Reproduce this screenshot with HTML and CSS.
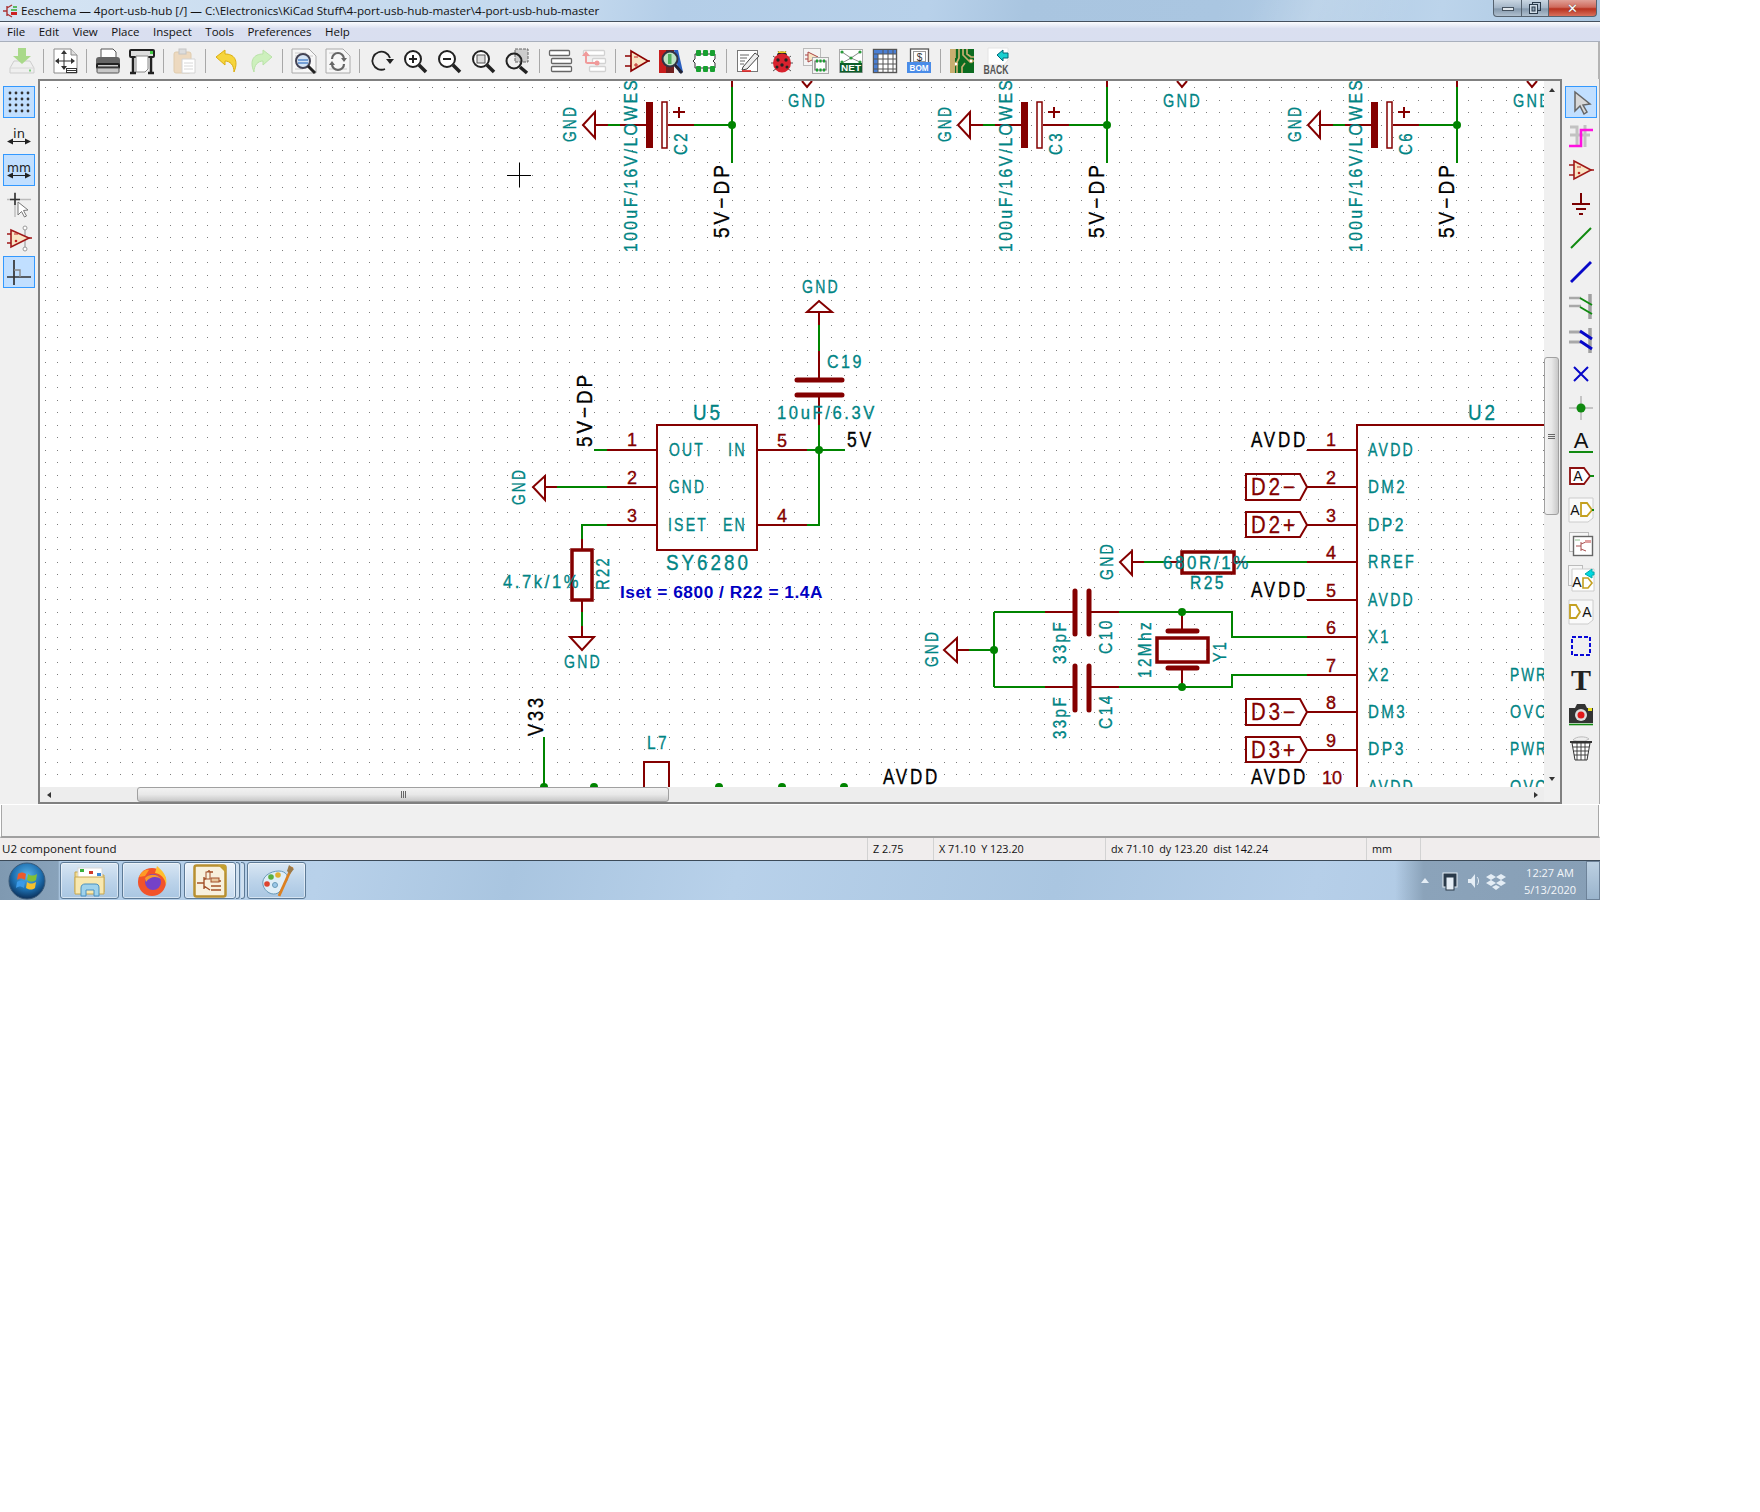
FILE: index.html
```html
<!DOCTYPE html>
<html lang="en">
<head>
<meta charset="utf-8">
<title>Eeschema</title>
<link rel="stylesheet" href="styles.css">
</head>
<body>
<div class="window">
  <header class="titlebar">
    <svg class="appicon" viewBox="0 0 16 16" width="16" height="16"><path d="M1 8H5M5 3V13M5 5L10 2M5 11L10 14" fill="none" stroke="#a33" stroke-width="1.4"/><path d="M9 7H15M11 4H15" stroke="#3a3" stroke-width="1.6"/><rect x="9" y="9" width="6" height="3" fill="#c22"/></svg>
    <span class="titletext">Eeschema — 4port-usb-hub [/] — C:\Electronics\KiCad Stuff\4-port-usb-hub-master\4-port-usb-hub-master</span>
    <div class="winbtns">
      <span class="wb wb-min"><i></i></span>
      <span class="wb wb-max"><svg viewBox="0 0 12 12" width="12" height="12"><rect x="3.5" y="0.5" width="8" height="8" fill="none" stroke="#2a3a4a"/><rect x="0.5" y="2.5" width="8" height="9" fill="#cfdbe6" stroke="#2a3a4a"/><rect x="3" y="5" width="3" height="4" fill="#8fa3b5" stroke="#2a3a4a"/></svg></span>
      <span class="wb wb-close">✕</span>
    </div>
  </header>

  <nav class="menubar">
    <span>File</span><span>Edit</span><span>View</span><span>Place</span><span>Inspect</span><span>Tools</span><span>Preferences</span><span>Help</span>
  </nav>

  <div class="toolbar">
    <span class="tb"><svg class="ic" viewBox="0 0 26 26"><path d="M5 13H21L25 20V25H1V20Z" fill="#efefef" stroke="#cdcdcd"/><path d="M1 20H25" stroke="#d8d8d8"/><rect x="20" y="21.5" width="2" height="2" fill="#7fd07f"/><path d="M9 0H17V8H22L13 16L4 8H9Z" fill="#a9d98a"/></svg></span>
    <i class="sep"></i>
    <span class="tb"><svg class="ic" viewBox="0 0 26 26"><path d="M2 1H19L25 7V25H2Z" fill="#fff" stroke="#8a8a8a"/><path d="M19 1V7H25" fill="#ddd" stroke="#8a8a8a"/><path d="M12 4V21M4 13H22" stroke="#333" stroke-width="1"/><path d="M12 2l-3 4h6zM12 22l-3-4h6zM3 13l4-3v6zM23 13l-4-3v6z" fill="#333"/><rect x="14.500" y="20.500" width="10" height="4" fill="#fff" stroke="#333"/><path d="M15 22.500H24" stroke="#333"/></svg></span>
    <i class="sep"></i>
    <span class="tb"><svg class="ic" viewBox="0 0 26 26"><path d="M6 1H18L21 4V11H6Z" fill="#fff" stroke="#555"/><rect x="1" y="9" width="24" height="12" rx="3" fill="#666"/><rect x="1" y="15" width="24" height="6" rx="2" fill="#222"/><rect x="3" y="17" width="20" height="1.500" fill="#ccc"/><path d="M2 20H24V24C24 25 23 25 22 25H4C3 25 2 25 2 24Z" fill="#c8c8c8" stroke="#555"/></svg></span>
    <span class="tb"><svg class="ic" viewBox="0 0 26 26"><rect x="1" y="2" width="24" height="7" rx="1" fill="#ddd" stroke="#222" stroke-width="2"/><rect x="21" y="3" width="3" height="3" fill="#4c4"/><path d="M7 8H19V21L16 24H7Z" fill="#fff" stroke="#888"/><path d="M4 9V24M22 9V24M1 25H7M19 25H25" stroke="#222" stroke-width="2.500"/></svg></span>
    <i class="sep"></i>
    <span class="tb"><svg class="ic" viewBox="0 0 26 26"><rect x="3" y="4" width="17" height="21" rx="2" fill="#edd9bf" stroke="#e0ccae"/><rect x="8" y="1" width="7" height="5" fill="#ddd" stroke="#c4c4c4"/><path d="M11 11H24V25H11Z" fill="#fff" stroke="#d4d4d4"/><path d="M13 15H22M13 18H22M13 21H22" stroke="#d8d8d8"/></svg></span>
    <i class="sep"></i>
    <span class="tb"><svg class="ic" viewBox="0 0 26 26"><path d="M2 9L11 2V6C20 6 25 12 20 24C20 17 16 13 11 13V17Z" fill="#f6d53c" stroke="#dcae10"/></svg></span>
    <span class="tb"><svg class="ic" viewBox="0 0 26 26"><path d="M24 9L15 2V6C6 6 1 12 6 24C6 17 10 13 15 13V17Z" fill="#cdf0bd" stroke="#b9e2a8"/></svg></span>
    <i class="sep"></i>
    <span class="tb"><svg class="ic" viewBox="0 0 26 26"><path d="M1 1H18L25 8V25H1Z" fill="#f7f7f7" stroke="#aaa"/><path d="M4 5H15M4 8H22M4 21H12" stroke="#ccc"/><circle cx="12" cy="13" r="7" fill="#d5e4f5" stroke="#445" stroke-width="2"/><path d="M7 12H17M7 15H17" stroke="#5588cc" stroke-width="1.500"/><path d="M17 18L24 25" stroke="#222" stroke-width="3"/></svg></span>
    <span class="tb"><svg class="ic" viewBox="0 0 26 26"><path d="M1 1H18L25 8V25H1Z" fill="#f7f7f7" stroke="#aaa"/><path d="M4 5H15M4 21H22" stroke="#ccc"/><path d="M7 11A6 6 0 0 1 19 11M19 16A6 6 0 0 1 7 16" fill="none" stroke="#666" stroke-width="2.200"/><path d="M16 10H22L19 14ZM4 17H10L7 13Z" fill="#666"/></svg></span>
    <i class="sep"></i>
    <span class="tb"><svg class="ic" viewBox="0 0 26 26"><path d="M17 21A9 9 0 1 1 22 10" fill="none" stroke="#222" stroke-width="1.800"/><path d="M18 11H26L22 16Z" fill="#222"/></svg></span>
    <span class="tb"><svg class="ic" viewBox="0 0 26 26"><circle cx="11" cy="11" r="8" fill="#fff" stroke="#222" stroke-width="2"/><path d="M7 11H15M11 7V15" stroke="#222" stroke-width="2"/><path d="M17 17L24 24" stroke="#222" stroke-width="3.500"/></svg></span>
    <span class="tb"><svg class="ic" viewBox="0 0 26 26"><circle cx="11" cy="11" r="8" fill="#fff" stroke="#222" stroke-width="2"/><path d="M7 11H15" stroke="#222" stroke-width="2"/><path d="M17 17L24 24" stroke="#222" stroke-width="3.500"/></svg></span>
    <span class="tb"><svg class="ic" viewBox="0 0 26 26"><circle cx="11" cy="11" r="8" fill="#fff" stroke="#222" stroke-width="2"/><rect x="7" y="7" width="8" height="8" fill="#ddd" stroke="#555"/><path d="M17 17L24 24" stroke="#222" stroke-width="3.500"/></svg></span>
    <span class="tb"><svg class="ic" viewBox="0 0 26 26"><rect x="11" y="1" width="13" height="13" fill="#ccc" stroke="#666" stroke-dasharray="3 1"/><circle cx="10" cy="13" r="7.500" fill="none" stroke="#222" stroke-width="2"/><path d="M16 19L23 25" stroke="#222" stroke-width="3.500"/></svg></span>
    <i class="sep"></i>
    <span class="tb"><svg class="ic" viewBox="0 0 26 26"><g fill="#fff" stroke="#666" stroke-width="1.300"><rect x="2.500" y="2.500" width="20" height="5" rx="1"/><rect x="4.500" y="10.500" width="20" height="5" rx="1"/><rect x="4.500" y="18.500" width="20" height="5" rx="1"/></g></svg></span>
    <span class="tb"><svg class="ic" viewBox="0 0 26 26"><g fill="#fff" stroke="#d2d2d2" stroke-width="1.300"><rect x="2.500" y="2.500" width="21" height="5" rx="1"/><rect x="11.500" y="10.500" width="13" height="5" rx="1"/><rect x="8.500" y="18.500" width="16" height="5" rx="1"/></g><path d="M5 8V14C5 15 6 15 8 15H15" fill="none" stroke="#f09a9a" stroke-width="2"/><path d="M5 3L1 8H9Z" fill="#f09a9a"/><circle cx="16" cy="15" r="2.500" fill="#f09a9a"/></svg></span>
    <i class="sep"></i>
    <span class="tb"><svg class="ic" viewBox="0 0 26 26"><path d="M7 3L24 13L7 23Z" fill="#f8e4c4" stroke="#8c0000" stroke-width="1.600"/><path d="M1 8H7M1 18H7M24 13H26" stroke="#8c0000" stroke-width="1.600"/><path d="M10 9H14M10 17H14M12 15V19" stroke="#c02020"/></svg></span>
    <span class="tb"><svg class="ic" viewBox="0 0 26 26"><rect x="1" y="2" width="7" height="23" fill="#c81e1e"/><rect x="8" y="2" width="8" height="23" fill="#702020"/><path d="M16 2H20L25 24L21 25Z" fill="#2a5fc0"/><circle cx="12" cy="11" r="7.500" fill="#bfe3c4" stroke="#334" stroke-width="2"/><rect x="10" y="6" width="3.500" height="10" fill="#50b060"/><path d="M17 17L24 25" stroke="#223" stroke-width="3"/></svg></span>
    <span class="tb"><svg class="ic" viewBox="0 0 26 26"><path d="M3 6H23V11L21 13L23 15V20H3V15L1 13L3 11Z" fill="#fff" stroke="#333" stroke-width="1"/><g fill="#18a030"><rect x="4" y="2" width="5" height="6" rx="1"/><rect x="11" y="2" width="5" height="6" rx="1"/><rect x="18" y="2" width="5" height="6" rx="1"/><rect x="4" y="18" width="5" height="6" rx="1"/><rect x="11" y="18" width="5" height="6" rx="1"/><rect x="18" y="18" width="5" height="6" rx="1"/></g></svg></span>
    <i class="sep"></i>
    <span class="tb"><svg class="ic" viewBox="0 0 26 26"><rect x="2.500" y="2.500" width="20" height="21" fill="#fff" stroke="#777"/><path d="M5 7H14M5 10H12M5 13H10M5 16H9" stroke="#666"/><path d="M8 19L20 5L24 8L12 21L7 22Z" fill="#eee" stroke="#444"/><path d="M7 23H16" stroke="#e02020" stroke-width="1.600"/></svg></span>
    <span class="tb"><svg class="ic" viewBox="0 0 26 26"><path d="M4 8L8 11M22 8L18 11M2 15H6M24 15H20M4 23L8 20M22 23L18 20M9 3L11 6M17 3L15 6" stroke="#555"/><ellipse cx="13" cy="7" rx="5" ry="3.500" fill="#222"/><rect x="9" y="3.500" width="8" height="1.500" fill="#e8c820"/><ellipse cx="13" cy="15" rx="9" ry="9.500" fill="#d8222e"/><g fill="#222"><circle cx="9" cy="12" r="1.700"/><circle cx="17" cy="12" r="1.700"/><circle cx="13" cy="17" r="1.700"/><circle cx="8" cy="19" r="1.500"/><circle cx="18" cy="19" r="1.500"/></g></svg></span>
    <span class="tb"><svg class="ic" viewBox="0 0 26 26"><rect x="0.500" y="0.500" width="17" height="17" fill="#f4f4f4" stroke="#bbb"/><path d="M5 4L15 9L5 14Z" fill="#f8e4c4" stroke="#a44"/><path d="M2 7H5M2 11H5" stroke="#a44"/><rect x="9.500" y="9.500" width="16" height="16" fill="#f4f4f4" stroke="#aaa"/><rect x="12" y="13" width="11" height="9" fill="#fff" stroke="#555"/><g fill="#18a030"><rect x="13" y="11.500" width="2" height="3"/><rect x="16.500" y="11.500" width="2" height="3"/><rect x="20" y="11.500" width="2" height="3"/><rect x="13" y="20.500" width="2" height="3"/><rect x="16.500" y="20.500" width="2" height="3"/><rect x="20" y="20.500" width="2" height="3"/></g></svg></span>
    <span class="tb"><svg class="ic" viewBox="0 0 26 26"><rect x="1.500" y="1.500" width="23" height="23" fill="#fff" stroke="#aaa"/><path d="M4 4L13 10L22 4M4 15L13 10L22 14" fill="none" stroke="#8a8a8a"/><g fill="#2a9a3a"><circle cx="4" cy="4" r="1.600"/><circle cx="13" cy="10" r="1.600"/><circle cx="22" cy="4" r="1.600"/><circle cx="4" cy="14" r="1.600"/><circle cx="22" cy="14" r="1.600"/></g><rect x="2" y="15" width="22" height="9.500" fill="#0e5c2a"/><text class="i-net" x="13" y="23.300" textLength="20" lengthAdjust="spacingAndGlyphs">NET</text></svg></span>
    <span class="tb"><svg class="ic" viewBox="0 0 26 26"><rect x="1.500" y="1.500" width="23" height="23" fill="#fff" stroke="#555" stroke-width="1.400"/><rect x="2" y="2" width="22" height="4" fill="#4a7fd4"/><rect x="2" y="2" width="4" height="22" fill="#4a7fd4"/><path d="M6 6V24M11 2V24M16 2V24M21 2V24M2 6H24M2 11H24M2 16H24M2 21H24" stroke="#555" stroke-width="1"/></svg></span>
    <span class="tb"><svg class="ic" viewBox="0 0 26 26"><rect x="4.500" y="1" width="18" height="17" fill="#fff" stroke="#555" stroke-width="1.300"/><rect x="7.500" y="3.500" width="12" height="10" fill="none" stroke="#999"/><text class="i-dollar" x="13.500" y="12.500">$</text><rect x="1" y="14" width="24" height="11" fill="#4a8ce8"/><text class="i-bom" x="13" y="23" textLength="19" lengthAdjust="spacingAndGlyphs">BOM</text></svg></span>
    <i class="sep"></i>
    <span class="tb"><svg class="ic" viewBox="0 0 26 26"><rect x="1" y="1" width="24" height="24" fill="#0c6b20"/><rect x="1" y="1" width="5" height="24" fill="#c8ae70"/><path d="M6 1V10M10 1V10L8 14V25M14 1V7L20 13H25M18 1V6L22 9H25M13 25V19L16 15" fill="none" stroke="#c8ae70" stroke-width="1.700"/><circle cx="22" cy="13" r="1.800" fill="#fff" stroke="#c8ae70"/><circle cx="7" cy="16" r="1.800" fill="#fff" stroke="#c8ae70"/></svg></span>
    <span class="tb"><svg class="ic" viewBox="0 0 26 26"><path d="M5 0H25V12L21 17H5Z" fill="#fff" stroke="#e4e4e4"/><path d="M14 7L20 2V5H25V10H20V13Z" fill="#18d0d0" stroke="#067"/><text class="i-back" x="13" y="25.500" textLength="25" lengthAdjust="spacingAndGlyphs">BACK</text></svg></span>
  </div>

  <div class="main">
    <aside class="sidetools">
      <span class="st on"><svg class="ic2" viewBox="0 0 26 26"><g fill="#333"><circle cx="4" cy="4" r="1.400"/><circle cx="10" cy="4" r="1.400"/><circle cx="16" cy="4" r="1.400"/><circle cx="22" cy="4" r="1.400"/><circle cx="4" cy="10" r="1.400"/><circle cx="10" cy="10" r="1.400"/><circle cx="16" cy="10" r="1.400"/><circle cx="22" cy="10" r="1.400"/><circle cx="4" cy="16" r="1.400"/><circle cx="10" cy="16" r="1.400"/><circle cx="16" cy="16" r="1.400"/><circle cx="22" cy="16" r="1.400"/><circle cx="4" cy="22" r="1.400"/><circle cx="10" cy="22" r="1.400"/><circle cx="16" cy="22" r="1.400"/><circle cx="22" cy="22" r="1.400"/></g></svg></span>
      <span class="st"><svg class="ic2" viewBox="0 0 26 26"><text class="i-unit" x="13" y="14.500">in</text><path d="M4 18.500H22" stroke="#222"/><path d="M1 18.500l6-3v6zM25 18.500l-6-3v6z" fill="#222"/></svg></span>
      <span class="st on"><svg class="ic2" viewBox="0 0 26 26"><text class="i-unit" x="13" y="15" textLength="24" lengthAdjust="spacingAndGlyphs">mm</text><path d="M4 18.500H22" stroke="#222"/><path d="M1 18.500l6-3v6zM25 18.500l-6-3v6z" fill="#222"/></svg></span>
      <span class="st"><svg class="ic2" viewBox="0 0 26 26"><path d="M1 8.500H25M9 1V26" stroke="#bbb" stroke-width="1.400"/><path d="M4 8.500H14M9 2V14" stroke="#333" stroke-width="1.600"/><path d="M12 11V24L15.500 20.500L18.500 26L20.500 25L17.500 19.500L22 19Z" fill="#fff" stroke="#777"/></svg></span>
      <span class="st"><svg class="ic2" viewBox="0 0 26 26"><path d="M19 2V24" stroke="#aaa" stroke-width="1.400"/><circle cx="19" cy="3" r="2" fill="#fff" stroke="#999"/><circle cx="19" cy="24" r="2" fill="#fff" stroke="#999"/><path d="M5 5L23 13L5 22Z" fill="#f8e4c4" stroke="#a01818" stroke-width="1.600"/><path d="M1 9H5M1 18H5M23 13H26" stroke="#a01818" stroke-width="1.600"/><path d="M8 9H12" stroke="#c02020"/><circle cx="10" cy="16" r="1.300" fill="#c02020"/></svg></span>
      <span class="st on"><svg class="ic2" viewBox="0 0 26 26"><path d="M1 18H25M8 1V26" stroke="#333" stroke-width="1.700"/><path d="M8 11H14V18" fill="none" stroke="#888" stroke-width="1.400"/></svg></span>
    </aside>

    <div class="frame">
      <svg class="sheet" viewBox="40 81 1504 706">
        <path class="griddots" d="M44.800 87.900H1544M44.800 100.400H1544M44.800 112.900H1544M44.800 125.300H1544M44.800 137.800H1544M44.800 150.300H1544M44.800 162.800H1544M44.800 175.300H1544M44.800 187.800H1544M44.800 200.300H1544M44.800 212.700H1544M44.800 225.200H1544M44.800 237.700H1544M44.800 250.200H1544M44.800 262.700H1544M44.800 275.200H1544M44.800 287.700H1544M44.800 300.200H1544M44.800 312.600H1544M44.800 325.100H1544M44.800 337.600H1544M44.800 350.100H1544M44.800 362.600H1544M44.800 375.100H1544M44.800 387.600H1544M44.800 400.100H1544M44.800 412.500H1544M44.800 425H1544M44.800 437.500H1544M44.800 450H1544M44.800 462.500H1544M44.800 475H1544M44.800 487.500H1544M44.800 499.900H1544M44.800 512.400H1544M44.800 524.900H1544M44.800 537.400H1544M44.800 549.900H1544M44.800 562.400H1544M44.800 574.900H1544M44.800 587.400H1544M44.800 599.800H1544M44.800 612.300H1544M44.800 624.800H1544M44.800 637.300H1544M44.800 649.800H1544M44.800 662.300H1544M44.800 674.800H1544M44.800 687.300H1544M44.800 699.700H1544M44.800 712.200H1544M44.800 724.700H1544M44.800 737.200H1544M44.800 749.700H1544M44.800 762.200H1544M44.800 774.700H1544"/>

        <!-- top capacitor groups -->
        <g>
          <path class="pin" d="M595 125H608M620 125H646M668 125H694M732 81V87M679 107V118M673 112H685M595 112V138L583 125Z"/>
          <rect class="plate-fill" x="646" y="102" width="7" height="46"/><rect class="plate-open" x="662" y="102" width="5" height="46"/>
          <path class="wire" d="M608 125H620M694 125H732M732 87V163"/><circle class="junc" cx="732" cy="125" r="4"/>
          <path class="pin" d="M802 81L807 87L812 81"/>
          <text class="t t-teal" x="576" y="142" transform="rotate(-90 576 142)" textLength="37" lengthAdjust="spacingAndGlyphs">GND</text>
          <text class="t t-teal" x="637" y="252" transform="rotate(-90 637 252)" textLength="188" lengthAdjust="spacingAndGlyphs">100uF/16V/LOWESR</text>
          <text class="t t-teal" x="687" y="155" transform="rotate(-90 687 155)" textLength="24" lengthAdjust="spacingAndGlyphs">C2</text>
          <text class="t t-black" x="729" y="238" transform="rotate(-90 729 238)" textLength="76" lengthAdjust="spacingAndGlyphs">5V−DP</text>
          <text class="t t-teal" x="788" y="107" textLength="39" lengthAdjust="spacingAndGlyphs">GND</text>
        </g>
        <g>
          <path class="pin" d="M970 125H983M995 125H1021M1043 125H1069M1107 81V87M1054 107V118M1048 112H1060M970 112V138L958 125Z"/>
          <rect class="plate-fill" x="1021" y="102" width="7" height="46"/><rect class="plate-open" x="1037" y="102" width="5" height="46"/>
          <path class="wire" d="M983 125H995M1069 125H1107M1107 87V163"/><circle class="junc" cx="1107" cy="125" r="4"/>
          <path class="pin" d="M1177 81L1182 87L1187 81"/>
          <text class="t t-teal" x="951" y="142" transform="rotate(-90 951 142)" textLength="37" lengthAdjust="spacingAndGlyphs">GND</text>
          <text class="t t-teal" x="1012" y="252" transform="rotate(-90 1012 252)" textLength="188" lengthAdjust="spacingAndGlyphs">100uF/16V/LOWESR</text>
          <text class="t t-teal" x="1062" y="155" transform="rotate(-90 1062 155)" textLength="24" lengthAdjust="spacingAndGlyphs">C3</text>
          <text class="t t-black" x="1104" y="238" transform="rotate(-90 1104 238)" textLength="76" lengthAdjust="spacingAndGlyphs">5V−DP</text>
          <text class="t t-teal" x="1163" y="107" textLength="39" lengthAdjust="spacingAndGlyphs">GND</text>
        </g>
        <g>
          <path class="pin" d="M1320 125H1333M1345 125H1371M1393 125H1419M1457 81V87M1404 107V118M1398 112H1410M1320 112V138L1308 125Z"/>
          <rect class="plate-fill" x="1371" y="102" width="7" height="46"/><rect class="plate-open" x="1387" y="102" width="5" height="46"/>
          <path class="wire" d="M1333 125H1345M1419 125H1457M1457 87V163"/><circle class="junc" cx="1457" cy="125" r="4"/>
          <path class="pin" d="M1527 81L1532 87L1537 81"/>
          <text class="t t-teal" x="1301" y="142" transform="rotate(-90 1301 142)" textLength="37" lengthAdjust="spacingAndGlyphs">GND</text>
          <text class="t t-teal" x="1362" y="252" transform="rotate(-90 1362 252)" textLength="188" lengthAdjust="spacingAndGlyphs">100uF/16V/LOWESR</text>
          <text class="t t-teal" x="1412" y="155" transform="rotate(-90 1412 155)" textLength="24" lengthAdjust="spacingAndGlyphs">C6</text>
          <text class="t t-black" x="1454" y="238" transform="rotate(-90 1454 238)" textLength="76" lengthAdjust="spacingAndGlyphs">5V−DP</text>
          <text class="t t-teal" x="1513" y="107" textLength="39" lengthAdjust="spacingAndGlyphs">GND</text>
        </g>

        <!-- cursor -->
        <path class="cursor" d="M507 175.500H531M519.500 163V187"/>

        <!-- U5 regulator -->
        <rect class="body" x="657" y="425" width="100" height="125"/>
        <path class="pin" d="M819 312V325M819 351V380M819 395V425M807 312H832L819 301ZM657 450H607M757 450H807M657 487H607M557 487H545M545 476V500L533 487ZM657 525H607M757 525H807M582 539V550M582 600V612M582 626V637M570 637H594L582 650Z"/>
        <path class="plate" d="M797 380H842M797 395H842"/>
        <path class="wire" d="M819 325V351M819 425V525H807M807 450H845M607 450H594M607 487H557M607 525H582V539M582 612V626"/>
        <circle class="junc" cx="819" cy="450" r="4"/>
        <rect class="body-thick" x="572" y="550" width="20" height="50"/>
        <text class="t t-teal" x="802" y="293" textLength="38" lengthAdjust="spacingAndGlyphs">GND</text>
        <text class="t t-teal" x="827" y="368" textLength="37" lengthAdjust="spacingAndGlyphs">C19</text>
        <text class="t t-teal" x="777" y="419" textLength="100" lengthAdjust="spacingAndGlyphs">10uF/6.3V</text>
        <text class="t t-black" x="847" y="447" textLength="27" lengthAdjust="spacingAndGlyphs">5V</text>
        <text class="t t-black" x="592" y="447" transform="rotate(-90 592 447)" textLength="75" lengthAdjust="spacingAndGlyphs">5V−DP</text>
        <text class="t t-big" x="693" y="420" textLength="30" lengthAdjust="spacingAndGlyphs">U5</text>
        <text class="t t-num t-mid" x="632" y="446">1</text>
        <text class="t t-num t-mid" x="632" y="484">2</text>
        <text class="t t-num t-mid" x="632" y="522">3</text>
        <text class="t t-num t-mid" x="782" y="447">5</text>
        <text class="t t-num t-mid" x="782" y="522">4</text>
        <text class="t t-teal" x="669" y="456" textLength="36" lengthAdjust="spacingAndGlyphs">OUT</text>
        <text class="t t-teal" x="728" y="456" textLength="19" lengthAdjust="spacingAndGlyphs">IN</text>
        <text class="t t-teal" x="669" y="493" textLength="37" lengthAdjust="spacingAndGlyphs">GND</text>
        <text class="t t-teal" x="668" y="531" textLength="40" lengthAdjust="spacingAndGlyphs">ISET</text>
        <text class="t t-teal" x="723" y="531" textLength="24" lengthAdjust="spacingAndGlyphs">EN</text>
        <text class="t t-big" x="666" y="570" textLength="85" lengthAdjust="spacingAndGlyphs">SY6280</text>
        <text class="t t-teal" x="609" y="590" transform="rotate(-90 609 590)" textLength="34" lengthAdjust="spacingAndGlyphs">R22</text>
        <text class="t t-teal" x="503" y="588" textLength="78" lengthAdjust="spacingAndGlyphs">4.7k/1%</text>
        <text class="t t-blue" x="620" y="598" textLength="203" lengthAdjust="spacingAndGlyphs">Iset = 6800 / R22 = 1.4A</text>
        <text class="t t-teal" x="564" y="668" textLength="38" lengthAdjust="spacingAndGlyphs">GND</text>
        <text class="t t-teal" x="525" y="505" transform="rotate(-90 525 505)" textLength="37" lengthAdjust="spacingAndGlyphs">GND</text>

        <!-- V33 / L7 -->
        <path class="wire" d="M544 737V787"/>
        <circle class="junc" cx="544" cy="787" r="4"/><circle class="junc" cx="594" cy="787" r="4"/><circle class="junc" cx="719" cy="787" r="4"/><circle class="junc" cx="782" cy="787" r="4"/><circle class="junc" cx="844" cy="787" r="4"/>
        <path class="pin" d="M644 787V762H669V787"/>
        <text class="t t-black" x="543" y="736" transform="rotate(-90 543 736)" textLength="41" lengthAdjust="spacingAndGlyphs">V33</text>
        <text class="t t-teal" x="647" y="749" textLength="22" lengthAdjust="spacingAndGlyphs">L7</text>
        <text class="t t-black" x="883" y="784" textLength="57" lengthAdjust="spacingAndGlyphs">AVDD</text>

        <!-- U2 hub -->
        <path class="body-open" d="M1544 425H1357V790"/>
        <path class="pin" d="M1357 450H1307M1357 487H1307M1357 525H1307M1357 562H1307M1357 600H1307M1357 637H1307M1357 675H1307M1357 712H1307M1357 750H1307"/>
        <path class="pin" d="M1246 474H1300L1307 487L1300 500H1246ZM1246 512H1300L1307 525L1300 537H1246ZM1246 699H1300L1307 712L1300 725H1246ZM1246 737H1300L1307 750L1300 762H1246Z"/>
        <text class="t t-big" x="1468" y="420" textLength="30" lengthAdjust="spacingAndGlyphs">U2</text>
        <text class="t t-black" x="1251" y="447" textLength="57" lengthAdjust="spacingAndGlyphs">AVDD</text>
        <text class="t t-black" x="1251" y="597" textLength="57" lengthAdjust="spacingAndGlyphs">AVDD</text>
        <text class="t t-black" x="1251" y="784" textLength="57" lengthAdjust="spacingAndGlyphs">AVDD</text>
        <text class="t t-red" x="1251" y="495" textLength="47" lengthAdjust="spacingAndGlyphs">D2−</text>
        <text class="t t-red" x="1251" y="533" textLength="47" lengthAdjust="spacingAndGlyphs">D2+</text>
        <text class="t t-red" x="1251" y="720" textLength="47" lengthAdjust="spacingAndGlyphs">D3−</text>
        <text class="t t-red" x="1251" y="758" textLength="47" lengthAdjust="spacingAndGlyphs">D3+</text>
        <text class="t t-num t-mid" x="1331" y="446">1</text>
        <text class="t t-num t-mid" x="1331" y="484">2</text>
        <text class="t t-num t-mid" x="1331" y="522">3</text>
        <text class="t t-num t-mid" x="1331" y="559">4</text>
        <text class="t t-num t-mid" x="1331" y="597">5</text>
        <text class="t t-num t-mid" x="1331" y="634">6</text>
        <text class="t t-num t-mid" x="1331" y="672">7</text>
        <text class="t t-num t-mid" x="1331" y="709">8</text>
        <text class="t t-num t-mid" x="1331" y="747">9</text>
        <text class="t t-num t-mid" x="1332" y="784">10</text>
        <text class="t t-teal" x="1368" y="456" textLength="47" lengthAdjust="spacingAndGlyphs">AVDD</text>
        <text class="t t-teal" x="1368" y="493" textLength="39" lengthAdjust="spacingAndGlyphs">DM2</text>
        <text class="t t-teal" x="1368" y="531" textLength="38" lengthAdjust="spacingAndGlyphs">DP2</text>
        <text class="t t-teal" x="1368" y="568" textLength="48" lengthAdjust="spacingAndGlyphs">RREF</text>
        <text class="t t-teal" x="1368" y="606" textLength="47" lengthAdjust="spacingAndGlyphs">AVDD</text>
        <text class="t t-teal" x="1368" y="643" textLength="23" lengthAdjust="spacingAndGlyphs">X1</text>
        <text class="t t-teal" x="1368" y="681" textLength="23" lengthAdjust="spacingAndGlyphs">X2</text>
        <text class="t t-teal" x="1368" y="718" textLength="39" lengthAdjust="spacingAndGlyphs">DM3</text>
        <text class="t t-teal" x="1368" y="755" textLength="38" lengthAdjust="spacingAndGlyphs">DP3</text>
        <text class="t t-teal" x="1368" y="793" textLength="47" lengthAdjust="spacingAndGlyphs">AVDD</text>
        <text class="t t-teal" x="1510" y="681" textLength="38" lengthAdjust="spacingAndGlyphs">PWR</text>
        <text class="t t-teal" x="1510" y="718" textLength="38" lengthAdjust="spacingAndGlyphs">OVC</text>
        <text class="t t-teal" x="1510" y="755" textLength="38" lengthAdjust="spacingAndGlyphs">PWR</text>
        <text class="t t-teal" x="1510" y="793" textLength="38" lengthAdjust="spacingAndGlyphs">OVC</text>

        <!-- R25 -->
        <path class="wire" d="M1144 562H1169M1245 562H1307"/>
        <path class="pin" d="M1132 562H1144M1169 562H1182M1234 562H1245M1132 551V575L1120 562Z"/>
        <rect class="body-thick" x="1182" y="552" width="52" height="21"/>
        <text class="t t-teal" x="1113" y="580" transform="rotate(-90 1113 580)" textLength="38" lengthAdjust="spacingAndGlyphs">GND</text>
        <text class="t t-teal" x="1163" y="569" textLength="88" lengthAdjust="spacingAndGlyphs">680R/1%</text>
        <text class="t t-teal" x="1190" y="589" textLength="36" lengthAdjust="spacingAndGlyphs">R25</text>

        <!-- crystal section -->
        <path class="wire" d="M969 650H994M994 612V687M994 612H1045M1119 612H1232V637H1307M994 687H1045M1119 687H1232V675H1307"/>
        <path class="pin" d="M957 650H969M957 638V662L944 650ZM1045 612H1075M1089 612H1119M1045 687H1075M1089 687H1119M1182 612V631M1182 668V687"/>
        <path class="plate" d="M1075 591V634M1089 591V634M1075 666V710M1089 666V710M1168 631H1197M1168 668H1197"/>
        <rect class="body-thick" x="1157" y="638" width="51" height="24"/>
        <circle class="junc" cx="994" cy="650" r="4"/><circle class="junc" cx="1182" cy="612" r="4"/><circle class="junc" cx="1182" cy="687" r="4"/>
        <text class="t t-teal" x="938" y="667" transform="rotate(-90 938 667)" textLength="37" lengthAdjust="spacingAndGlyphs">GND</text>
        <text class="t t-teal" x="1066" y="664" transform="rotate(-90 1066 664)" textLength="44" lengthAdjust="spacingAndGlyphs">33pF</text>
        <text class="t t-teal" x="1066" y="739" transform="rotate(-90 1066 739)" textLength="44" lengthAdjust="spacingAndGlyphs">33pF</text>
        <text class="t t-teal" x="1112" y="654" transform="rotate(-90 1112 654)" textLength="36" lengthAdjust="spacingAndGlyphs">C10</text>
        <text class="t t-teal" x="1112" y="729" transform="rotate(-90 1112 729)" textLength="36" lengthAdjust="spacingAndGlyphs">C14</text>
        <text class="t t-teal" x="1151" y="678" transform="rotate(-90 1151 678)" textLength="58" lengthAdjust="spacingAndGlyphs">12Mhz</text>
        <text class="t t-teal" x="1226" y="662" transform="rotate(-90 1226 662)" textLength="22" lengthAdjust="spacingAndGlyphs">Y1</text>
      </svg>

      <div class="vbar">
        <span class="arr arr-up"></span>
        <span class="vthumb"><i></i><i></i><i></i></span>
        <span class="arr arr-down"></span>
      </div>
      <div class="hbar">
        <span class="arr arr-left"></span>
        <span class="hthumb"><i></i><i></i><i></i></span>
        <span class="arr arr-right"></span>
      </div>
      <div class="corner"></div>
    </div>

    <aside class="sidetools sidetools-right">
      <span class="st on"><svg class="ic2" viewBox="0 0 26 26"><path d="M7 3V22L12 17L16 25L19 23L15 16L22 15Z" fill="#d8d8d8" stroke="#666" stroke-width="1.500"/></svg></span>
      <span class="st"><svg class="ic2" viewBox="0 0 26 26"><path d="M2 4H9V22M2 12H22M17 2V24" fill="none" stroke="#c2c2c2" stroke-width="3"/><path d="M1 23H13V7H25" fill="none" stroke="#ff10e0" stroke-width="2.600"/></svg></span>
      <span class="st"><svg class="ic2" viewBox="0 0 26 26"><path d="M6 4L23 13L6 22Z" fill="#f8e4c4" stroke="#a01818" stroke-width="1.600"/><path d="M1 8H6M1 18H6M23 13H26" stroke="#a01818" stroke-width="1.600"/><path d="M9 10H13" stroke="#c02020"/><circle cx="11" cy="16" r="1.300" fill="#c02020"/></svg></span>
      <span class="st"><svg class="ic2" viewBox="0 0 26 26"><path d="M13 2V13M4 13H22M8 18H18M11 23H15" stroke="#7a0000" stroke-width="2"/></svg></span>
      <span class="st"><svg class="ic2" viewBox="0 0 26 26"><path d="M3 23L23 3" stroke="#108a10" stroke-width="2"/></svg></span>
      <span class="st"><svg class="ic2" viewBox="0 0 26 26"><path d="M3 23L23 3" stroke="#0808c8" stroke-width="2.800"/></svg></span>
      <span class="st"><svg class="ic2" viewBox="0 0 26 26"><path d="M1 5H13M1 13H13" stroke="#a8a8a8" stroke-width="2.500"/><path d="M22 1V26" stroke="#a0a0a0" stroke-width="3.500"/><path d="M12 5L24 12M12 14L24 21" stroke="#108a10" stroke-width="2"/></svg></span>
      <span class="st"><svg class="ic2" viewBox="0 0 26 26"><path d="M1 5H13M1 15H13" stroke="#a8a8a8" stroke-width="3"/><path d="M22 1V26" stroke="#a0a0a0" stroke-width="3.500"/><path d="M12 4L24 12M12 14L24 22" stroke="#0808c8" stroke-width="3"/></svg></span>
      <span class="st"><svg class="ic2" viewBox="0 0 26 26"><path d="M6 6L20 20M20 6L6 20" stroke="#0808c8" stroke-width="2"/></svg></span>
      <span class="st"><svg class="ic2" viewBox="0 0 26 26"><path d="M1 13H25M13 1V25" stroke="#c4c4c4" stroke-width="2"/><circle cx="13" cy="13" r="4.500" fill="#108a10"/></svg></span>
      <span class="st"><svg class="ic2" viewBox="0 0 26 26"><text class="i-a" x="13" y="19">A</text><path d="M1 23H25" stroke="#108a10" stroke-width="2"/></svg></span>
      <span class="st"><svg class="ic2" viewBox="0 0 26 26"><path d="M2 5H16L22 13L16 21H2Z" fill="#fff" stroke="#8c1010" stroke-width="1.800"/><path d="M22 13H26" stroke="#108a10" stroke-width="2"/><text class="i-a2" x="10" y="18">A</text></svg></span>
      <span class="st"><svg class="ic2" viewBox="0 0 26 26"><path d="M1 1H25V21L20 25H1Z" fill="#fafafa" stroke="#ccc"/><text class="i-a2" x="7" y="18">A</text><path d="M13 6H19L24 13L19 19H13Z" fill="#fff" stroke="#c4a020" stroke-width="1.800"/><path d="M24 13H26" stroke="#108a10" stroke-width="2"/></svg></span>
      <span class="st"><svg class="ic2" viewBox="0 0 26 26"><rect x="1.500" y="1.500" width="19" height="19" fill="#f6f6f6" stroke="#bbb"/><rect x="5.500" y="5.500" width="19" height="19" fill="#fff" stroke="#666" stroke-width="1.400"/><path d="M8 15H13M13 11V20M13 13L18 11M13 18L18 20" stroke="#a85050" fill="none"/><rect x="17" y="9" width="6" height="3" fill="#e0a0a0"/><path d="M7 9H12" stroke="#90c090"/></svg></span>
      <span class="st"><svg class="ic2" viewBox="0 0 26 26"><rect x="0.500" y="0.500" width="14" height="20" fill="#f6f6f6" stroke="#bbb"/><path d="M4 4H26V26H4Z" fill="#fff" stroke="#ccc"/><text class="i-a2" x="9" y="22">A</text><path d="M15 13H20L24 18L20 23H15Z" fill="#fff" stroke="#c4a020" stroke-width="1.600"/><path d="M24 4L17 9L24 13V10H26V7H24Z" fill="#00d8e0" stroke="#0aa"/></svg></span>
      <span class="st"><svg class="ic2" viewBox="0 0 26 26"><path d="M1 1H25V21L20 25H1Z" fill="#fafafa" stroke="#ccc"/><path d="M2 6H8L12 13L8 19H2Z" fill="#fff" stroke="#c4a020" stroke-width="1.800"/><text class="i-a2" x="19" y="18">A</text></svg></span>
      <span class="st"><svg class="ic2" viewBox="0 0 26 26"><rect x="4" y="4" width="18" height="18" fill="none" stroke="#0808d8" stroke-width="2" stroke-dasharray="4 2"/></svg></span>
      <span class="st"><svg class="ic2" viewBox="0 0 26 26"><text class="i-t" x="13" y="23">T</text></svg></span>
      <span class="st"><svg class="ic2" viewBox="0 0 26 26"><path d="M1 7H7L9 3H17L19 7H25V22H1Z" fill="#333"/><rect x="20" y="7" width="4" height="3" fill="#e8e020"/><circle cx="13" cy="14" r="6" fill="#ddd"/><circle cx="13" cy="14" r="3.500" fill="#e01818"/><path d="M1 23.500H25" stroke="#108a10" stroke-width="1.600"/></svg></span>
      <span class="st"><svg class="ic2" viewBox="0 0 26 26"><path d="M5 5C8 1 18 1 21 4L17 6H9Z" fill="#eee" stroke="#bbb"/><path d="M2 7H24" stroke="#333" stroke-width="2"/><path d="M4 8L7 25H19L22 8Z" fill="#fff" stroke="#333"/><path d="M5 12H21M6 16H20M6 20H20M9 8V25M13 8V25M17 8V25" stroke="#333" stroke-width="0.900"/></svg></span>
    </aside>
  </div>

  <div class="msgpanel"></div>

  <footer class="statusbar">
    <span class="sc sc-1">U2 component found</span>
    <span class="sc sc-2">Z 2.75</span>
    <span class="sc sc-3">X 71.10&nbsp; Y 123.20</span>
    <span class="sc sc-4">dx 71.10&nbsp; dy 123.20&nbsp; dist 142.24</span>
    <span class="sc sc-5">mm</span>
    <span class="sc sc-6"></span>
  </footer>

  <div class="taskbar">
    <span class="start"><svg viewBox="0 0 38 38" width="38" height="38"><defs><radialGradient id="orb" cx="50%" cy="35%" r="65%"><stop offset="0" stop-color="#5ab4e8"/><stop offset="0.6" stop-color="#1d6fb0"/><stop offset="1" stop-color="#0c2f58"/></radialGradient></defs><circle cx="19" cy="19" r="18" fill="url(#orb)" stroke="#3b5a78"/><path d="M10 12C13 10 15 10 18 12L17 18C14 16 12 16 9 18Z" fill="#ec5a2c"/><path d="M20 12C23 14 25 14 29 12L28 18C25 20 23 20 19 18Z" fill="#82c034"/><path d="M9 20C12 18 14 18 17 20L16 26C13 24 11 24 8 26Z" fill="#3c9ae8"/><path d="M19 20C22 22 24 22 28 20L27 26C24 28 22 28 18 26Z" fill="#f8c02c"/></svg></span>
    <span class="tk"><svg viewBox="0 0 34 34" width="34" height="34"><path d="M2 8H14L16 11H31V28H2Z" fill="#f3dc94" stroke="#c8a850"/><rect x="5" y="4" width="24" height="10" fill="#fff" stroke="#d8d8d8"/><rect x="7" y="5" width="4" height="3" fill="#3ab03a"/><rect x="16" y="7" width="4" height="3" fill="#d03a2a"/><rect x="24" y="9" width="4" height="3" fill="#3a8ad8"/><path d="M2 13H31V30H2Z" fill="#f8e8b0" stroke="#c8a850"/><path d="M8 32V24C8 21 10 20 12 20H22C25 20 26 21 26 24V32H21V26H13V32Z" fill="#9fd2ec" stroke="#4a90c0"/></svg></span>
    <span class="tk"><svg viewBox="0 0 34 34" width="34" height="34"><circle cx="17" cy="18" r="14" fill="#f2532a"/><path d="M22 2C28 7 33 13 31 21C30 14 26 10 20 9Z" fill="#ffbf2e"/><path d="M4 13C6 8 10 5 14 6L10 12Z" fill="#ff9a24"/><circle cx="18" cy="18" r="8" fill="#7442c8"/><path d="M10 14C15 9 23 10 26 15C22 12 15 12 11 18Z" fill="#f8992c"/></svg></span>
    <span class="tk tk-active"><svg viewBox="0 0 34 34" width="34" height="34"><rect x="1.500" y="1.500" width="31" height="31" rx="2" fill="#f8f1de" stroke="#b89030" stroke-width="2.500"/><path d="M25 1H33V9Z" fill="#c4a030"/><path d="M4 19H11M11 13V25M11 16L16 12V6M11 22L17 26M14 8H20M18 17H28M18 22H28M18 26H28" fill="none" stroke="#a2512a" stroke-width="1.400"/><rect x="13" y="8" width="4" height="7" fill="#f8f1de" stroke="#a2512a"/><rect x="18" y="14" width="8" height="4" fill="#e8c8a0" stroke="#a2512a"/></svg></span>
    <span class="tkgroup"><i></i><i></i></span>
    <span class="tk"><svg viewBox="0 0 34 34" width="34" height="34"><path d="M3 21C1 13 10 7 19 7C26 7 30 13 26 18C22 23 22 26 18 29C12 32 5 28 3 21Z" fill="#dfeef8" stroke="#6a9ab8"/><circle cx="7" cy="20" r="2.800" fill="#dd4430"/><circle cx="11" cy="13" r="2.800" fill="#5ab040"/><circle cx="18" cy="11" r="2.800" fill="#e0b030"/><circle cx="15" cy="21" r="2.500" fill="#9cc8e8" stroke="#6a9ab8"/><path d="M32 3L19 32" stroke="#dc8020" stroke-width="2.800"/><path d="M29 1L34 5L30 10L27 7Z" fill="#9c7a4a"/></svg></span>
    <div class="tray">
      <svg class="tray-ic" viewBox="0 0 100 24" width="100" height="24"><path d="M3 14L7 9L11 14Z" fill="#e4edf5"/><rect x="25" y="4" width="14" height="14" fill="#2a3a4a" stroke="#e4edf5"/><rect x="28" y="8" width="8" height="13" fill="#e4edf5" stroke="#2a3a4a"/><path d="M50 10H53L57 5V19L53 14H50Z" fill="#e4edf5"/><path d="M59 8C61 10 61 14 59 16" stroke="#e4edf5" fill="none"/><path d="M73 5L78 8L73 11L68 8ZM83 5L88 8L83 11L78 8ZM73 11L78 14L73 17L68 14ZM83 11L88 14L83 17L78 14ZM78 16L82 18L78 21L74 18Z" fill="#e4edf5"/></svg>
      <span class="clock"><span>12:27 AM</span><span>5/13/2020</span></span>
      <span class="showdesk"></span>
    </div>
  </div>
</div>
</body>
</html>
```

FILE: styles.css
```css
* { box-sizing: border-box; }
html, body { margin: 0; padding: 0; background: #fff; }
body { width: 1760px; height: 1512px; overflow: hidden; font-family: "Open Sans", "Liberation Sans", sans-serif; }

.window { width: 1600px; height: 900px; display: flex; flex-direction: column; }

/* title bar */
.titlebar {
  height: 22px; display: flex; align-items: center; padding-left: 2px;
  border-bottom: 1px solid #44505e;
  background:
    linear-gradient(112deg, rgba(255,255,255,0) 78%, rgba(255,255,255,.16) 82%, rgba(255,255,255,0) 88%),
    linear-gradient(100deg, #d6e5f4 0, #c9dcef 18%, #c4d9ee 36%, #b4cee8 42%, #b8d1ea 58%, #a9c5e0 64%, #aac6e1 76%, #bcd4eb 90%, #aac6e0 100%);
}
.appicon { flex: none; }
.titletext { margin-left: 3px; font-size: 11.66px; color: #111; white-space: nowrap; }
.winbtns { margin-left: auto; margin-right: 3px; height: 17px; display: flex; align-self: flex-start; }
.wb { display: flex; align-items: center; justify-content: center; height: 17px; border: 1px solid #55626f; border-top: 0; }
.wb-min { width: 29px; border-radius: 0 0 0 4px; background: linear-gradient(#c9d6e2, #a2b4c6 50%, #8498ac 55%, #b0c0cf); }
.wb-min i { display: block; width: 12px; height: 4px; background: #dfe6ec; border: 1px solid #45525f; margin-top: 2px; }
.wb-max { width: 27px; border-left: 0; background: linear-gradient(#c9d6e2, #a2b4c6 50%, #8498ac 55%, #b0c0cf); }
.wb-close { width: 48px; border-left: 0; border-radius: 0 0 4px 0; color: #fff; font: bold 13px "DejaVu Sans", sans-serif; background: linear-gradient(#e0a097, #cf6a5c 45%, #b8321f 55%, #d8705c); text-shadow: 0 0 1px #333; }

/* menu */
.menubar {
  height: 20px; display: flex; align-items: center; padding: 0 0 0 7px; gap: 13.5px;
  font: 11.5px "Open Sans", sans-serif; color: #111;
  border-bottom: 1px solid #a9b0bd;
  background: linear-gradient(#fbfcfe, #dadff0 35%, #d9dff0);
}

/* main toolbar */
.toolbar { height: 37px; display: flex; align-items: center; padding: 1px 0 0 5px; background: #f0f0f0; border-right: 2px solid #b4b4b4; }
.tb { flex: none; width: 34.15px; display: flex; justify-content: center; align-items: center; }
.sep { flex: none; width: 8.6px; height: 24px; background: linear-gradient(90deg, transparent 3.8px, #a8a8a8 3.8px, #a8a8a8 4.8px, transparent 4.8px); }
.ic { width: 26px; height: 26px; display: block; overflow: visible; }
.ic2 { width: 26px; height: 26px; display: block; overflow: visible; }

.i-net, .i-bom { font: bold 9px "Liberation Sans", sans-serif; fill: #fff; text-anchor: middle; }
.i-dollar { font: 10px "Liberation Sans", sans-serif; fill: #333; text-anchor: middle; }
.i-back { font: bold 12.5px "Liberation Sans", sans-serif; fill: #555; text-anchor: middle; }
.i-unit { font: 13px "DejaVu Sans", sans-serif; fill: #222; text-anchor: middle; }
.i-a { font: 22px "Liberation Sans", sans-serif; fill: #111; text-anchor: middle; }
.i-a2 { font: 14px "Liberation Sans", sans-serif; fill: #111; text-anchor: middle; }
.i-t { font: bold 30px "Liberation Serif", serif; fill: #222; text-anchor: middle; }

/* main area */
.main { height: 725px; display: flex; }
.sidetools { width: 38px; flex: none; background: #f0f0f0; display: flex; flex-direction: column; align-items: center; padding-top: 7px; }
.sidetools-right { width: 38px; border-right: 1px solid #aaa; }
.st { flex: none; width: 32px; height: 32px; margin-bottom: 2px; display: flex; align-items: center; justify-content: center; border: 1px solid transparent; }
.st.on { background: #c1dfff; border-color: #3399ff; }

.frame {
  width: 1524px; flex: none; border: 2px solid #808080;
  display: grid; grid-template-columns: 1504px 16px; grid-template-rows: 706px 15px;
}
.sheet { display: block; width: 1504px; height: 706px; background: #fff; overflow: hidden; }

.griddots { fill: none; stroke: #7c7c7c; stroke-width: 1; stroke-dasharray: 1 11.487; shape-rendering: crispEdges; }
.pin { fill: none; stroke: #840000; stroke-width: 2; }
.wire { fill: none; stroke: #008400; stroke-width: 2; }
.body { fill: none; stroke: #840000; stroke-width: 2; }
.body-open { fill: none; stroke: #840000; stroke-width: 2; }
.body-thick { fill: none; stroke: #840000; stroke-width: 3.5; }
.plate { fill: none; stroke: #840000; stroke-width: 5; stroke-linecap: round; }
.plate-fill { fill: #840000; }
.plate-open { fill: #fff; stroke: #840000; stroke-width: 1.5; }
.junc { fill: #008400; }
.cursor { fill: none; stroke: #000; stroke-width: 1; shape-rendering: crispEdges; }

.t { font-family: "Liberation Sans", sans-serif; stroke-width: 0.35px; }
.t-teal { font-size: 19px; fill: #008484; stroke: #008484; letter-spacing: 3px; }
.t-big { font-size: 22px; fill: #008484; stroke: #008484; letter-spacing: 3.5px; }
.t-black { font-size: 22px; fill: #000; stroke: #000; letter-spacing: 3.5px; }
.t-red { font-size: 23px; fill: #840000; stroke: #840000; letter-spacing: 3.5px; }
.t-num { font-size: 18px; fill: #840000; stroke: #840000; }
.t-mid { text-anchor: middle; }
.t-blue { font-size: 16px; font-weight: bold; fill: #0000c2; stroke: none; letter-spacing: 0.5px; }

/* scrollbars */
.vbar { background: #f0f0f0; display: flex; flex-direction: column; align-items: stretch; }
.hbar { background: #ededed; display: flex; align-items: stretch; }
.corner { background: #f0f0f0; }
.arr { flex: none; display: block; position: relative; }
.arr-up, .arr-down { height: 17px; }
.arr-left, .arr-right { width: 17px; }
.arr::before { content: ""; position: absolute; left: 50%; top: 50%; width: 0; height: 0; border: 3px solid transparent; transform: translate(-50%, -50%); }
.arr-up::before { border-bottom: 4px solid #333; border-top: 0; }
.arr-down::before { border-top: 4px solid #333; border-bottom: 0; }
.arr-left::before { border-right: 4px solid #333; border-left: 0; }
.arr-right::before { border-left: 4px solid #333; border-right: 0; }
.vthumb { flex: none; height: 158px; margin: 259px 1px 0 0; display: flex; flex-direction: column; align-items: center; justify-content: center; gap: 1px; border: 1px solid #a0a0a0; border-radius: 3px; background: linear-gradient(90deg, #f2f2f2, #e8e8e8 50%, #c8c8c8); }
.vthumb i { display: block; width: 7px; height: 1px; background: #666; }
.arr-down { margin-top: auto; }
.hthumb { flex: none; width: 532px; margin-left: 80px; display: flex; align-items: center; justify-content: center; gap: 1px; border: 1px solid #a0a0a0; border-radius: 3px; background: linear-gradient(#f2f2f2, #e8e8e8 50%, #c8c8c8); }
.hthumb i { display: block; width: 1px; height: 7px; background: #666; }
.arr-right { margin-left: auto; }

/* message panel + status */
.msgpanel { height: 34px; background: #f0f0f0; border: 1px solid #fff; border-bottom: 2px solid #a0a0a0; box-shadow: inset 1px 0 0 #a8a8a8, inset -1px 0 0 #a8a8a8; }
.statusbar { height: 22px; display: flex; background: #f0eded; font: 10.8px "Open Sans", sans-serif; color: #111; line-height: 22px; }
.sc { flex: none; padding-left: 5px; border-left: 1px solid #d2d2d2; white-space: nowrap; overflow: hidden; }
.sc-1 { width: 867px; padding-left: 2px; border-left: 0; font-size: 11.5px; }
.sc-2 { width: 66px; }
.sc-3 { width: 172px; }
.sc-4 { width: 261px; }
.sc-5 { width: 54px; }
.sc-6 { flex: 1; }

/* taskbar */
.taskbar {
  height: 40px; flex: none; display: flex; align-items: stretch; padding: 1px 0; border-top: 1px solid #3c4a58;
  background:
    linear-gradient(90deg, #7f99b1 0, #88a2ba 58px, rgba(136,162,186,0) 60px),
    linear-gradient(105deg, #afcbe6 0, #b8d1ea 20%, #a9c5e0 32%, #b8d1ea 46%, #aac6e1 66%, #b6cfe9 82%, #a9c4de 100%);
}
.start { flex: none; width: 60px; display: flex; align-items: center; justify-content: center; padding-right: 7px; }
.tk { flex: none; width: 59px; margin-right: 3px; display: flex; align-items: center; justify-content: center; border: 1px solid #5d7a96; border-radius: 3px; background: linear-gradient(#d8e6f3, #bdd4ea 50%, #a9c6e2); box-shadow: inset 0 0 0 1px rgba(255,255,255,.5); }
.tk-active { width: 52px; margin-right: 0; background: linear-gradient(#eef4fa, #d8e6f4 50%, #c4d9ee); }
.tkgroup { flex: none; width: 10px; display: flex; gap: 1px; margin-right: 1px; }
.tkgroup i { display: block; flex: none; width: 4px; border: 1px solid #5d7a96; border-left: 0; border-radius: 0 3px 3px 0; background: #cfe0f0; }
.tray { margin-left: auto; width: 205px; flex: none; display: flex; align-items: center; padding-left: 23px; background: linear-gradient(90deg, rgba(125,150,172,0), #8ba3ba 14%, #879fb6); margin-top: -1px; margin-bottom: -1px; }
.tray-ic { flex: none; }
.clock { flex: none; width: 64px; display: flex; flex-direction: column; align-items: center; gap: 4px; font: 11px/13px "Open Sans", sans-serif; color: #f4f7fa; white-space: nowrap; }
.showdesk { flex: none; width: 14px; align-self: stretch; margin-left: auto; border: 1px solid #6d8298; background: linear-gradient(#bcd0e2, #9ab4cc); }
```
